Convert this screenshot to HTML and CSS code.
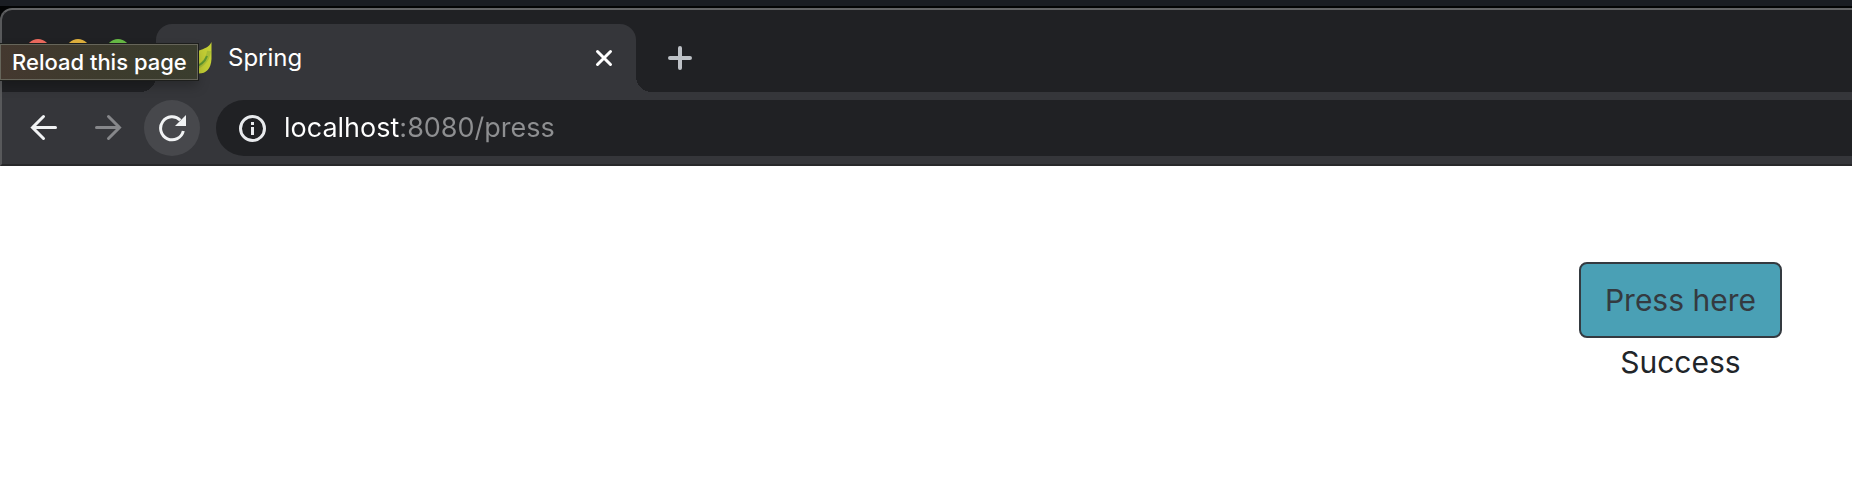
FILE: index.html
```html
<!DOCTYPE html>
<html lang="en">
<head>
<meta charset="utf-8">
<title>Spring</title>
<link rel="stylesheet" href="styles.css">
</head>
<body>
<div class="browser">
  <header class="chrome">
    <div class="tab-strip">
      <div class="lights">
        <span class="light light-red"></span>
        <span class="light light-yellow"></span>
        <span class="light light-green"></span>
      </div>
      <div class="tab">
        <svg class="favicon" viewBox="0 0 32 32" aria-hidden="true">
          <path d="M31.500 0C29 5 25 6.500 18 9C8 12.500 3 17 4 24C5 30 12 32 19 31.500C26 31.500 31 27 31.500 17Z" fill="#c4cf35"/>
          <path d="M29 9C28 18 22 25 8 28" fill="none" stroke="#a9bd35" stroke-width="4"/>
          <path d="M27 14C25 20 20 24 12 26" fill="none" stroke="#5f9831" stroke-width="2"/>
        </svg>
        <span class="tab-title">Spring</span>
        <button class="tab-close" type="button" aria-label="Close tab">
          <svg viewBox="0 0 20 20"><path d="M3.500 3.500L16.500 16.500M16.500 3.500L3.500 16.500" fill="none" stroke="#fff" stroke-width="3" stroke-linecap="round"/></svg>
        </button>
      </div>
      <button class="new-tab" type="button" aria-label="New tab">
        <svg viewBox="0 0 24 24"><path d="M12 2V22M2 12H22" fill="none" stroke="#bdc1c6" stroke-width="4" stroke-linecap="round"/></svg>
      </button>
    </div>
    <div class="toolbar">
      <button class="nav" type="button" aria-label="Back">
        <svg viewBox="0 0 28 28"><path d="M25.500 13.500H2.500M13.500 2.500L2.500 13.500L13.500 24.500" fill="none" stroke="#f1f3f4" stroke-width="3" stroke-linecap="round"/></svg>
      </button>
      <button class="nav" type="button" aria-label="Forward" disabled>
        <svg viewBox="0 0 28 28"><path d="M2.500 13.500H25.500M14.500 2.500L25.500 13.500L14.500 24.500" fill="none" stroke="#86878a" stroke-width="3" stroke-linecap="round"/></svg>
      </button>
      <button class="nav nav-hover" type="button" aria-label="Reload this page">
        <svg viewBox="0 0 28 28"><path d="M22.300 6.200A11.500 11.500 0 1 0 25.300 17" fill="none" stroke="#f1f3f4" stroke-width="3"/><path d="M28 1V12H17Z" fill="#f1f3f4"/></svg>
      </button>
      <div class="address">
        <svg class="info" viewBox="0 0 28 28" aria-hidden="true"><circle cx="14.500" cy="14.500" r="12" fill="none" stroke="#e8eaed" stroke-width="3"/><path d="M13 8h3v3h-3zM13 13h3v8h-3z" fill="#e8eaed"/></svg>
        <input class="url" type="text" aria-label="Address" value="localhost:8080/press">
      </div>
    </div>
    <div class="tooltip" role="tooltip">Reload this page</div>
  </header>
  <main class="page">
    <form class="press-form">
      <button class="press" type="button">Press here</button>
      <output class="status">Success</output>
    </form>
  </main>
</div>
</body>
</html>
```

FILE: styles.css
```css
* {
  box-sizing: border-box;
}

body {
  margin: 0;
  background: #fff;
  font-family: Inter, "Liberation Sans", sans-serif;
}

button {
  padding: 0;
  border: 0;
  background: none;
  font: inherit;
}

svg {
  display: block;
}

.browser {
  min-height: 100vh;
}

.chrome {
  position: relative;
  padding-top: 6px;
  background: linear-gradient(#1a1d23 6px, #030405 6px);
}

.tab-strip {
  display: flex;
  align-items: center;
  margin-top: 2px;
  padding-top: 14px;
  border-top: 2px solid #636466;
  border-left: 2px solid #58595b;
  border-top-left-radius: 12px;
  background: #202124;
}

.lights {
  display: flex;
  gap: 16px;
  width: 154px;
  padding: 0 24px 14px;
}

.light {
  width: 24px;
  height: 24px;
  border-radius: 50%;
}

.light-red {
  background: #ed6a5e;
}

.light-yellow {
  background: #e0b13d;
}

.light-green {
  background: #67bb45;
}

.tab {
  position: relative;
  display: flex;
  align-items: center;
  gap: 16px;
  width: 480px;
  height: 68px;
  padding: 0 22px 0 24px;
  border-radius: 16px 16px 0 0;
  background: #35363a;
}

.tab::before,
.tab::after {
  content: "";
  position: absolute;
  bottom: 0;
  width: 16px;
  height: 16px;
}

.tab::before {
  right: 100%;
  background: radial-gradient(circle at 0 0, transparent 16px, #35363a 16px);
}

.tab::after {
  left: 100%;
  background: radial-gradient(circle at 100% 0, transparent 16px, #35363a 16px);
}

.favicon {
  width: 32px;
  height: 32px;
}

.tab-title {
  flex: 1;
  color: #fff;
  font-size: 24px;
  line-height: 32px;
}

.tab-close svg {
  width: 20px;
  height: 20px;
}

.new-tab {
  margin-left: 32px;
}

.new-tab svg {
  width: 24px;
  height: 24px;
}

.toolbar {
  display: flex;
  align-items: center;
  gap: 8px;
  padding: 8px 0 8px 14px;
  border-left: 2px solid #58595b;
  border-bottom: 2px solid #28282a;
  background: #35363a;
}

.nav {
  display: grid;
  place-items: center;
  width: 56px;
  height: 56px;
  border-radius: 50%;
}

.nav-hover {
  background: #47484c;
}

.nav svg,
.info {
  width: 28px;
  height: 28px;
}

.address {
  display: flex;
  flex: 1;
  align-items: center;
  gap: 18px;
  height: 56px;
  margin-left: 8px;
  padding-left: 22px;
  border-radius: 28px 0 0 28px;
  background: #202124;
}

.url {
  flex: 1;
  min-width: 0;
  padding: 0;
  border: 0;
  outline: 0;
  background: linear-gradient(90deg, #fff 115px, #8e8f91 115px);
  background-clip: text;
  -webkit-background-clip: text;
  -webkit-text-fill-color: transparent;
  color: #fff;
  font: 27px/40px Inter, "Liberation Sans", sans-serif;
}

.tooltip {
  position: absolute;
  top: 44px;
  left: 0;
  padding: 3px 10px 3px 11px;
  border: 1px solid #66655a;
  outline: 1px solid #1d1e1c;
  background: linear-gradient(90deg, #44382f, #3d3b2d 50%, #3a3d2e);
  box-shadow: 0 6px 12px rgba(0, 0, 0, 0.25);
  color: #fff;
  font-size: 22px;
  font-weight: 500;
  line-height: 28px;
}

.page {
  display: flex;
  justify-content: flex-end;
  padding: 96px 70px;
}

.press-form {
  display: flex;
  flex-direction: column;
  align-items: center;
  font-size: 30px;
  line-height: 48px;
}

.press {
  padding: 12px 24px;
  border: 2px solid #343a40;
  border-radius: 8px;
  background: #4aa0b5;
  color: #343a40;
}

.status {
  color: #212529;
}
```
